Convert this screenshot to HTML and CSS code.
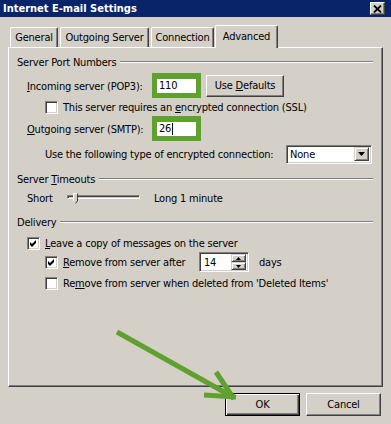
FILE: index.html
```html
<!doctype html>
<html>
    <head>
        <title>Internet E-mail Settings</title>
        <link rel="stylesheet" href="styles.css">
    </head>
    <body>
        <div class="titlebar">
            <span class="title">Internet E-mail Settings</span>
            <span class="close-btn">
                <svg width="9" height="8" viewBox="0 0 9 8"><path d="M1 0.5 L8 7.5 M8 0.5 L1 7.5" stroke="#000" stroke-width="1.8"/></svg>
            </span>
        </div>

        <div class="tabs">
            <div class="tab tab-general">General</div>
            <div class="tab tab-outgoing">Outgoing Server</div>
            <div class="tab tab-connection">Connection</div>
            <div class="tab tab-advanced active">Advanced</div>
        </div>

        <div class="panel">
            <!-- ports -->
            <div class="group-head head-ports"><span>Server Port Numbers</span><div class="etch"></div></div>

            <div class="row port-row row-incoming">
                <span class="port-label"><u>I</u>ncoming server (POP3):</span>
                <div class="highlight"><div class="edit">110</div></div>
                <div class="button use-defaults"><span>Use <u>D</u>efaults</span></div>
            </div>

            <div class="row check-row row-ssl indent2">
                <span class="checkbox"></span>
                <span>This server requires an <u>e</u>ncrypted connection (SSL)</span>
            </div>

            <div class="row port-row row-outgoing">
                <span class="port-label"><u>O</u>utgoing server (SMTP):</span>
                <div class="highlight"><div class="edit">26<span class="caret"></span></div></div>
            </div>

            <div class="row row-encrypt indent2">
                <span class="encrypt-label">Use the following type of encrypted connection:</span>
                <div class="combo">
                    <span class="combo-text">None</span>
                    <span class="combo-btn">
                        <svg width="7" height="4" viewBox="0 0 7 4"><path d="M0 0 H7 L3.5 4 Z" fill="#000"/></svg>
                    </span>
                </div>
            </div>

            <!-- timeouts -->
            <div class="group-head head-timeouts"><span>Server <u>T</u>imeouts</span><div class="etch"></div></div>

            <div class="row row-slider">
                <span class="short-label">Short</span>
                <div class="slider">
                    <div class="track"></div>
                    <svg class="thumb" width="5" height="11" viewBox="0 0 5 11">
                        <path d="M0.5 0.5 H4.5 V8 L2.5 10.5 L0.5 8 Z" fill="#d4d0c8"/>
                        <path d="M0.5 8 V0.5 H4" stroke="#fff" fill="none"/>
                        <path d="M4.5 0.5 V8 L2.5 10.5" stroke="#404040" fill="none"/>
                    </svg>
                </div>
                <span class="long-label">Long</span>
                <span>1 minute</span>
            </div>

            <!-- delivery -->
            <div class="group-head head-delivery"><span>Delivery</span><div class="etch"></div></div>

            <div class="row check-row row-leave indent1">
                <span class="checkbox checked">
                    <svg width="7" height="7" viewBox="0 0 7 7"><path d="M0 2 L2 4 L6 0 V3 L2 7 L0 5 Z" fill="#000"/></svg>
                </span>
                <span><u>L</u>eave a copy of messages on the server</span>
            </div>

            <div class="row check-row row-remove indent2">
                <span class="checkbox checked">
                    <svg width="7" height="7" viewBox="0 0 7 7"><path d="M0 2 L2 4 L6 0 V3 L2 7 L0 5 Z" fill="#000"/></svg>
                </span>
                <span class="remove-label"><u>R</u>emove from server after</span>
                <div class="spin">
                    <span class="spin-text">14</span>
                    <span class="spin-btns">
                        <span class="spin-btn"><svg width="5" height="3" viewBox="0 0 5 3"><path d="M0 3 H5 L2.5 0 Z" fill="#000"/></svg></span>
                        <span class="spin-btn"><svg width="5" height="3" viewBox="0 0 5 3"><path d="M0 0 H5 L2.5 3 Z" fill="#000"/></svg></span>
                    </span>
                </div>
                <span class="days">days</span>
            </div>

            <div class="row check-row row-deleted indent2">
                <span class="checkbox"></span>
                <span>Re<u>m</u>ove from server when deleted from 'Deleted Items'</span>
            </div>
        </div>

        <div class="dialog-buttons">
            <div class="button default">OK</div>
            <div class="button">Cancel</div>
        </div>

        <!-- green arrow drawn over the dialog -->
        <svg class="arrow" width="391" height="424" viewBox="0 0 391 424">
            <g stroke="#5ea12e" stroke-width="5" fill="none" stroke-linecap="butt">
                <line x1="117" y1="332" x2="233" y2="397"/>
                <line x1="216" y1="372" x2="234" y2="399"/>
                <line x1="204" y1="395" x2="236" y2="397"/>
            </g>
        </svg>
    </body>
</html>
```

FILE: styles.css
```css
body {
    margin: 0;
    width: 391px;
    height: 424px;
    overflow: hidden;
    position: relative;
    background: #d4d0c8;
    font-family: "DejaVu Sans Condensed", "Liberation Sans", sans-serif;
    font-size: 11px;
    color: #000;
}

u {
    text-decoration-thickness: 1px;
    text-underline-offset: 1px;
}

.titlebar {
    height: 17px;
    background-color: #0a246a;
    display: flex;
    align-items: center;
    justify-content: space-between;
    padding: 0 6px 0 3px;
}

.title {
    color: #fff;
    font-weight: bold;
}

.close-btn {
    width: 15px;
    height: 13px;
    box-sizing: border-box;
    background: #d4d0c8;
    border: 1px solid;
    border-color: #fff #404040 #404040 #fff;
    box-shadow: inset -1px -1px #808080;
    display: flex;
    align-items: center;
    justify-content: center;
}

/* tabs */
.tabs {
    margin-top: 8px;
    height: 22px;
    display: flex;
    align-items: flex-end;
    padding-left: 10px;
    gap: 2px;
    letter-spacing: -0.2px;
}

.tab {
    height: 20px;
    box-sizing: border-box;
    border-left: 1px solid #fff;
    border-top: 1px solid #fff;
    border-right: 1px solid #404040;
    box-shadow: inset -1px 0 #808080;
    border-top-left-radius: 2px;
    border-top-right-radius: 2px;
    display: flex;
    align-items: center;
    justify-content: center;
    background: #d4d0c8;
}

.tab-general { width: 48px; }
.tab-outgoing { width: 89px; }
.tab-connection { width: 63px; }

.tab-advanced {
    width: 63px;
    height: 23px;
    margin-left: -1px;
    margin-bottom: -1px;
    padding-bottom: 2px;
    position: relative;
    z-index: 1;
}

/* tab page */
.panel {
    margin: 0 8px;
    height: 340px;
    box-sizing: border-box;
    border: 1px solid;
    border-color: #fff #404040 #404040 #fff;
    box-shadow: inset -1px -1px #808080;
    padding: 7px 9px 0 8px;
    letter-spacing: -0.2px;
}

.group-head {
    height: 14px;
    display: flex;
    align-items: center;
}

.etch {
    flex: 1;
    margin-left: 4px;
    border-top: 1px solid #808080;
    border-bottom: 1px solid #fff;
}

.row {
    display: flex;
    align-items: center;
    padding-left: 10px;
}

.indent1 { padding-left: 10px; }
.indent2 { padding-left: 28px; }

.check-row {
    height: 14px;
    gap: 5px;
}

.port-row { height: 25px; }

.row-incoming { margin-top: 4px; }
.row-ssl { margin-top: 2px; }
.row-outgoing { margin-top: 2px; }
.row-encrypt { margin-top: 4px; height: 18px; }
.head-timeouts { margin-top: 9px; }
.row-slider { margin-top: 5px; height: 14px; }
.head-delivery { margin-top: 10px; }
.row-leave { margin-top: 7px; }
.row-remove { margin-top: 2px; height: 20px; }
.row-deleted { margin-top: 4px; }

.port-label {
    width: 125px;
    padding-top: 2px;
}

.highlight {
    width: 49px;
    height: 25px;
    box-sizing: border-box;
    border: 5px solid #5ea12e;
    border-top-width: 6px;
    background: #fff;
}

.edit {
    padding-left: 2px;
    line-height: 13px;
    display: flex;
    align-items: center;
}

.caret {
    display: inline-block;
    width: 1px;
    height: 12px;
    background: #000;
    margin-left: 1px;
}

.button {
    background: #d4d0c8;
    box-sizing: border-box;
    border: 1px solid;
    border-color: #fff #404040 #404040 #fff;
    box-shadow: inset -1px -1px #808080;
    display: flex;
    align-items: center;
    justify-content: center;
    letter-spacing: -0.2px;
}

.use-defaults {
    width: 78px;
    height: 22px;
    margin-left: 5px;
}

.checkbox {
    width: 13px;
    height: 13px;
    box-sizing: border-box;
    background: #fff;
    border: 1px solid;
    border-color: #808080 #fff #fff #808080;
    box-shadow: inset 1px 1px #404040, inset -1px -1px #d4d0c8;
    display: flex;
    align-items: center;
    justify-content: center;
    flex-shrink: 0;
}

.encrypt-label {
    width: 241px;
}

.combo {
    width: 86px;
    height: 19px;
    box-sizing: border-box;
    background: #fff;
    border: 1px solid;
    border-color: #808080 #fff #fff #808080;
    box-shadow: inset 1px 1px #404040, inset -1px -1px #d4d0c8;
    display: flex;
    align-items: center;
    padding: 2px;
}

.combo-text {
    flex: 1;
    padding-left: 1px;
}

.combo-btn {
    width: 15px;
    height: 14px;
    box-sizing: border-box;
    background: #d4d0c8;
    border: 1px solid;
    border-color: #d4d0c8 #404040 #404040 #d4d0c8;
    box-shadow: inset 1px 1px #fff, inset -1px -1px #808080;
    display: flex;
    align-items: center;
    justify-content: center;
}

/* slider */
.short-label { width: 40px; }

.slider {
    width: 73px;
    height: 14px;
    position: relative;
    display: flex;
    align-items: center;
    margin-right: 14px;
}

.track {
    width: 100%;
    height: 4px;
    box-sizing: border-box;
    border: 1px solid;
    border-color: #808080 #fff #fff #808080;
    box-shadow: inset 1px 1px #404040;
    margin-top: -2px;
}

.thumb {
    position: absolute;
    left: 6px;
    top: 2px;
}

.long-label { width: 26px; }

/* delivery */
.remove-label { width: 131px; }

.spin {
    width: 50px;
    height: 20px;
    box-sizing: border-box;
    background: #fff;
    border: 1px solid;
    border-color: #808080 #fff #fff #808080;
    box-shadow: inset 1px 1px #404040, inset -1px -1px #d4d0c8;
    display: flex;
    align-items: center;
    padding: 2px;
}

.spin-text {
    flex: 1;
    padding-left: 2px;
}

.spin-btns {
    display: flex;
    flex-direction: column;
    width: 15px;
    height: 16px;
}

.spin-btn {
    flex: 1;
    box-sizing: border-box;
    background: #d4d0c8;
    border: 1px solid;
    border-color: #d4d0c8 #404040 #404040 #d4d0c8;
    box-shadow: inset 1px 1px #fff, inset -1px -1px #808080;
    display: flex;
    align-items: center;
    justify-content: center;
}

.days { margin-left: 5px; }

/* bottom buttons */
.dialog-buttons {
    display: flex;
    justify-content: flex-end;
    gap: 6px;
    margin-top: 6px;
    padding-right: 10px;
}

.dialog-buttons .button {
    width: 75px;
    height: 23px;
}

.dialog-buttons .default {
    border: 1px solid #000;
    box-shadow: inset 1px 1px #fff, inset -1px -1px #404040, inset -2px -2px #808080;
}

.arrow {
    position: absolute;
    left: 0;
    top: 0;
    pointer-events: none;
}
```
